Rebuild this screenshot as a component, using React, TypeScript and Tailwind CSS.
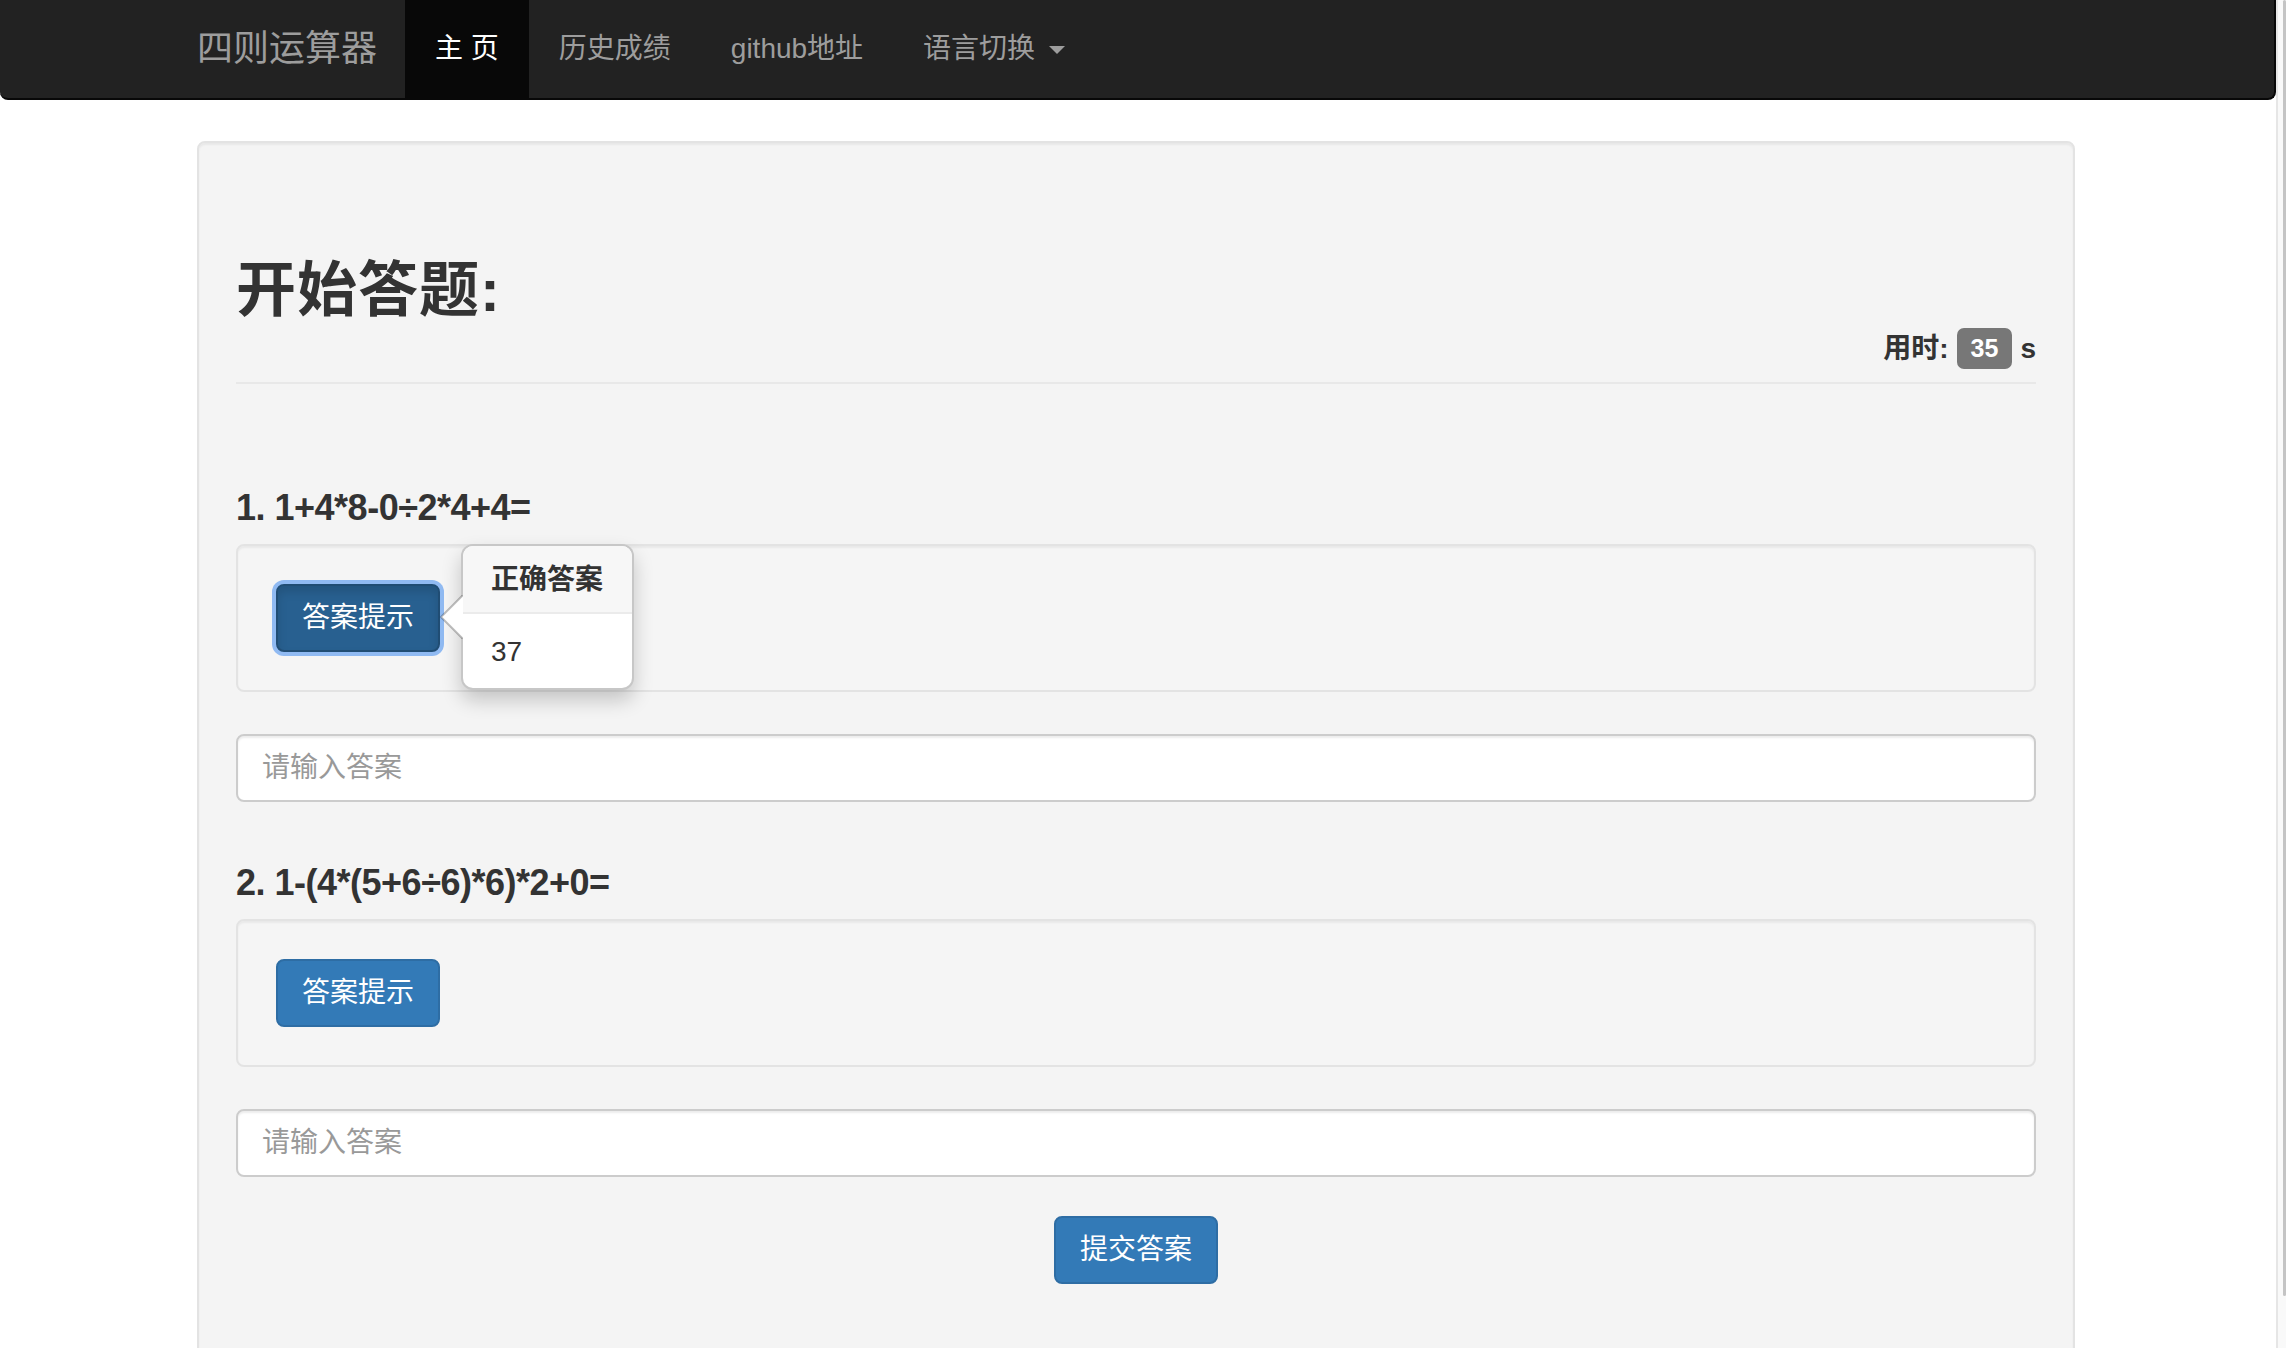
import React from "react";

// --- Types ---
interface Question {
  no: number;
  expr: string;
  hintOpen?: boolean;
  answer?: string;
}

const questions: Question[] = [
  { no: 1, expr: "1+4*8-0÷2*4+4=", hintOpen: true, answer: "37" },
  { no: 2, expr: "1-(4*(5+6÷6)*6)*2+0=" },
];

const FONT = "font-['Liberation_Sans','Noto_Sans_CJK_SC',sans-serif]";

// --- Components ---
const NavBar: React.FC = () => (
  <nav className="h-[100px] bg-[#222] border-b-2 border-r-2 border-[#080808] rounded-b-[8px] flex items-stretch pl-[197px]">
    <span className="flex items-center text-[36px] text-[#9d9d9d] pr-[28px]">
      四则运算器
    </span>
    <a className="flex items-center px-[30px] bg-[#080808] text-white text-[28px]">
      主 页
    </a>
    <a className="flex items-center px-[30px] text-[#9d9d9d] text-[28px]">
      历史成绩
    </a>
    <a className="flex items-center px-[30px] text-[#9d9d9d] text-[28px]">
      github地址
    </a>
    <a className="flex items-center px-[30px] text-[#9d9d9d] text-[28px]">
      语言切换
      <span className="ml-[14px] mt-[2px] w-0 h-0 border-x-[8px] border-t-[8px] border-x-transparent border-t-[#9d9d9d]" />
    </a>
  </nav>
);

const HintPopover: React.FC<{ answer: string }> = ({ answer }) => (
  <div className="absolute left-[223px] top-[-2px] w-[173px] h-[146px] bg-white border-2 border-[rgba(0,0,0,0.22)] rounded-[12px] shadow-[0_10px_20px_rgba(0,0,0,0.2)] z-10">
    <svg
      className="absolute left-[-24px] top-[49px]"
      width="24"
      height="44"
      viewBox="0 0 24 44"
    >
      <polygon points="24,0 2,22 24,44" fill="#fff" />
      <polyline
        points="24,0 2,22 24,44"
        fill="none"
        stroke="rgba(0,0,0,0.25)"
        strokeWidth="2"
      />
    </svg>
    <div className="px-[28px] pt-[14px] h-[68px] bg-[#f7f7f7] border-b-2 border-[#ebebeb] rounded-t-[10px] text-[28px] font-semibold text-[#333] leading-[40px]">
      正确答案
    </div>
    <div className="px-[28px] py-[18px] text-[28px] text-[#333] leading-[40px]">
      {answer}
    </div>
  </div>
);

const QuestionBlock: React.FC<{ q: Question; first?: boolean }> = ({ q, first }) => (
  <div className={first ? "mt-[101px]" : "mt-[58px]"}>
    <h4 className="text-[36px] font-bold text-[#333] leading-[46px] h-[40px] tracking-[-0.5px]">
      {q.no}. {q.expr}
    </h4>
    <div className="relative mt-[19px] bg-[#f5f5f5] border-2 border-[#e3e3e3] rounded-[8px] shadow-[inset_0_2px_2px_rgba(0,0,0,0.05)] p-[38px]">
      {q.hintOpen ? (
        <button className="h-[68px] px-[24px] rounded-[8px] text-[28px] text-white bg-[#286090] border-2 border-[#204d74] shadow-[inset_0_6px_10px_rgba(0,0,0,0.125),0_0_0_4px_rgba(110,166,240,0.75)]">
          答案提示
        </button>
      ) : (
        <button className="h-[68px] px-[24px] rounded-[8px] text-[28px] text-white bg-[#337ab7] border-2 border-[#2e6da4]">
          答案提示
        </button>
      )}
      {q.hintOpen && q.answer && <HintPopover answer={q.answer} />}
    </div>
    <input
      className="mt-[42px] block w-full h-[68px] px-[24px] bg-white border-2 border-[#ccc] rounded-[8px] shadow-[inset_0_2px_2px_rgba(0,0,0,0.075)] text-[28px] text-[#555] placeholder:text-[#999] outline-none"
      placeholder="请输入答案"
    />
  </div>
);

const App: React.FC = () => {
  return (
    <div className={`h-screen w-full flex overflow-hidden bg-white ${FONT}`}>
      <div className="flex-1 min-w-0">
        <NavBar />

        {/* Main well */}
        <section className="ml-[197px] mt-[41px] w-[1878px] bg-[#f4f4f4] border-2 border-[#e3e3e3] rounded-[8px] shadow-[inset_0_2px_2px_rgba(0,0,0,0.05)] px-[37px] pt-[38px] pb-[120px]">
          <div className="mt-[77px] pb-[13px] border-b-2 border-[#e8e8e8]">
            <h2 className="text-[60px] font-bold text-[#333] leading-[66px] h-[66px] tracking-[1px]">
              开始答题:
            </h2>
            <div className="mt-[4px] h-[41px] flex items-center justify-end gap-[8px] text-[28px] font-bold text-[#333]">
              <span>用时:</span>
              <span className="h-[41px] px-[14px] flex items-center rounded-[7px] bg-[#777] text-white text-[25px]">
                35
              </span>
              <span>s</span>
            </div>
          </div>

          {questions.map((q, i) => (
            <QuestionBlock key={q.no} q={q} first={i === 0} />
          ))}

          <div className="mt-[39px] flex justify-center">
            <button className="h-[68px] px-[24px] rounded-[8px] text-[28px] text-white bg-[#337ab7] border-2 border-[#2e6da4]">
              提交答案
            </button>
          </div>
        </section>
      </div>

      {/* Scrollbar strip */}
      <div className="w-[10px] shrink-0 h-full bg-[#f9f9f9] border-l-2 border-[#e6e6e6] flex justify-end">
        <div className="w-[3px] h-[1296px] bg-[#c4c4c4] rounded-full" />
      </div>
    </div>
  );
};

export default App;
